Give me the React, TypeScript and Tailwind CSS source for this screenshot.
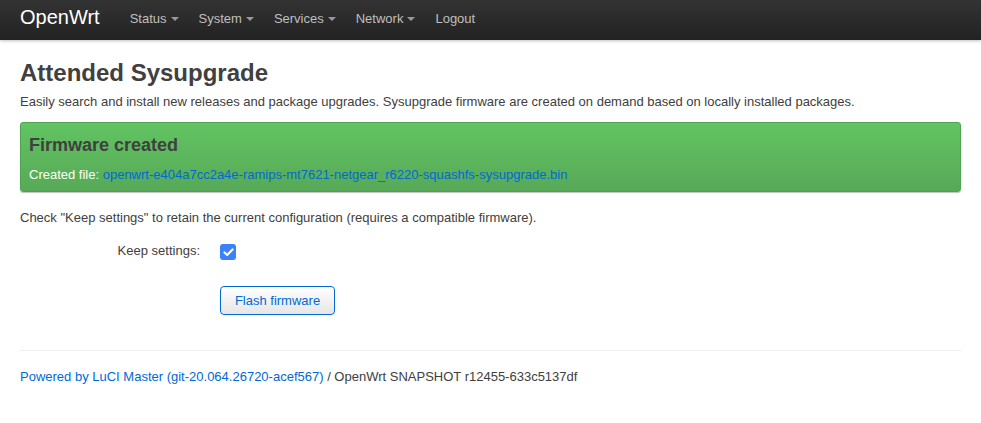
import React from "react";

const Caret = () => (
  <span className="ml-[4px] inline-block w-0 h-0 border-l-[4px] border-r-[4px] border-t-[4px] border-l-transparent border-r-transparent border-t-[#999] align-middle" />
);

export default function App() {
  const nav = ["Status", "System", "Services", "Network"];
  return (
    <div className="min-h-[423px] bg-white text-[#404040] font-['Liberation_Sans',Arial,sans-serif] text-[13px]">
      <header className="h-[40px] bg-gradient-to-b from-[#333333] to-[#222222] flex items-center px-[20px] shadow-[0_1px_3px_rgba(0,0,0,0.25)]">
        <span className="text-white text-[20px] leading-[20px] mr-[30px] -mt-[6px]">OpenWrt</span>
        <nav className="flex items-center -mt-[2px]">
          {nav.map((n) => (
            <span key={n} className="text-[#bfbfbf] text-[13px] mr-[20px] flex items-center">
              {n}
              <Caret />
            </span>
          ))}
          <span className="text-[#bfbfbf] text-[13px]">Logout</span>
        </nav>
      </header>
      <main className="px-[20px]">
        <h1 className="text-[24px] font-bold leading-[30px] mt-[18px] text-[#404040]">Attended Sysupgrade</h1>
        <p className="text-[13px] leading-[18px] mt-[5px]">
          Easily search and install new releases and package upgrades. Sysupgrade firmware are created on demand based on locally installed packages.
        </p>
        <div className="mt-[11px] h-[70px] rounded-[3px] border border-[#4ea34e] bg-gradient-to-b from-[#62c462] to-[#57a957] px-[8px] pt-[10px] shadow-[0_1px_1px_rgba(0,0,0,0.25)]">
          <h2 className="text-[18px] font-bold leading-[24px] text-[#404040]">Firmware created</h2>
          <p className="mt-[9px] text-[13px] leading-[18px] text-white">
            Created file: <a className="text-[#0069d6]">openwrt-e404a7cc2a4e-ramips-mt7621-netgear_r6220-squashfs-sysupgrade.bin</a>
          </p>
        </div>
        <p className="mt-[17px] text-[13px] leading-[18px]">
          Check "Keep settings" to retain the current configuration (requires a compatible firmware).
        </p>
        <div className="mt-[17px] flex items-center">
          <label className="w-[180px] text-right text-[13px] leading-[18px] -mt-[3px]">Keep settings:</label>
          <span className="ml-[20px] w-[16px] h-[16px] rounded-[3px] bg-[#3b82f6] flex items-center justify-center">
            <svg width="11" height="9" viewBox="0 0 11 9" fill="none">
              <path d="M1.5 4.5 L4.2 7 L9.5 1.5" stroke="white" strokeWidth="2.2" strokeLinecap="round" strokeLinejoin="round" />
            </svg>
          </span>
        </div>
        <div className="mt-[26px] ml-[200px]">
          <button className="h-[29px] w-[115px] rounded-[4px] border border-[#0069d6] bg-gradient-to-b from-white to-[#e6e6e6] text-[#0069d6] text-[13px]">
            Flash firmware
          </button>
        </div>
        <hr className="mt-[35px] border-t border-[#eeeeee]" />
        <footer className="mt-[17px] text-[13px] leading-[18px]">
          <a className="text-[#0069d6]">Powered by LuCI Master (git-20.064.26720-acef567)</a> / OpenWrt SNAPSHOT r12455-633c5137df
        </footer>
      </main>
    </div>
  );
}
